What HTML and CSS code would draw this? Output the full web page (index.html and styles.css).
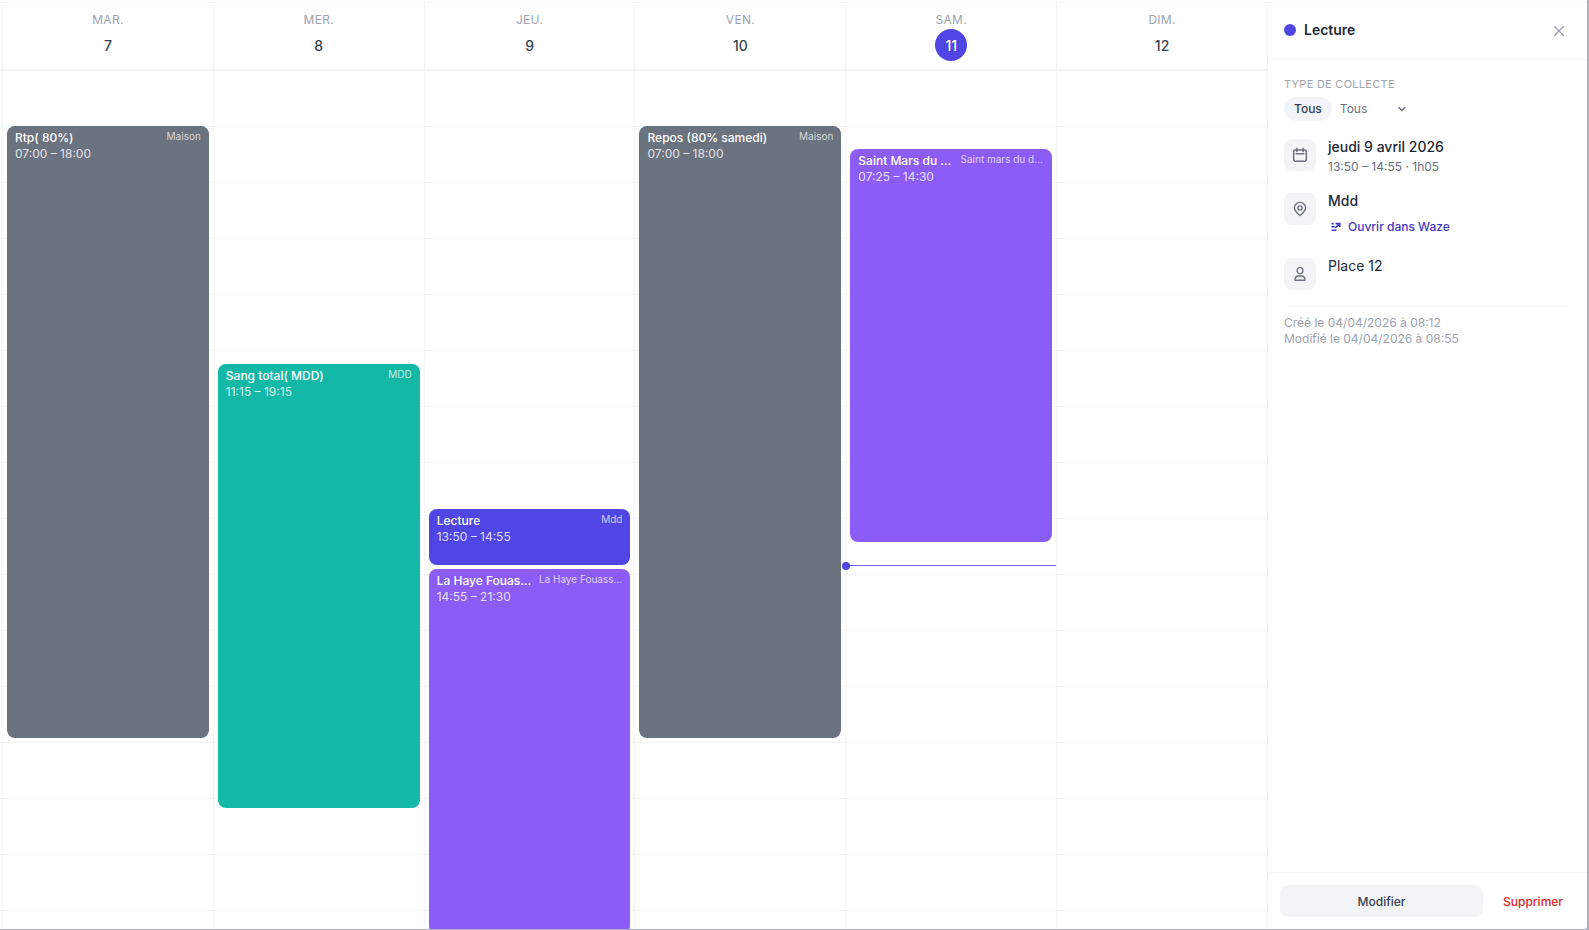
FILE: index.html
```html
<!DOCTYPE html>
<html lang="fr">
<head>
    <meta charset="UTF-8">
    <meta name="viewport" content="width=device-width, initial-scale=1.0">
    <title>Planning</title>
    <link rel="stylesheet" href="styles.css">
</head>
<body>
    <div class="app">
        <main class="calendar">
            <div class="days">
                <div class="day"><span class="day-name">mar.</span><span class="day-num">7</span></div>
                <div class="day"><span class="day-name">mer.</span><span class="day-num">8</span></div>
                <div class="day"><span class="day-name">jeu.</span><span class="day-num">9</span></div>
                <div class="day"><span class="day-name">ven.</span><span class="day-num">10</span></div>
                <div class="day"><span class="day-name">sam.</span><span class="day-num today">11</span></div>
                <div class="day"><span class="day-name">dim.</span><span class="day-num">12</span></div>
            </div>
            <!-- --start / --end : minutes depuis 06:00 -->
            <div class="grid">
                <div class="column">
                    <button class="event gray" style="--start:60; --end:720">
                        <span class="event-head"><span class="event-title">Rtp( 80%)</span><span class="event-place">Maison</span></span>
                        <span class="event-time">07:00 – 18:00</span>
                    </button>
                </div>
                <div class="column">
                    <button class="event teal" style="--start:315; --end:795">
                        <span class="event-head"><span class="event-title">Sang total( MDD)</span><span class="event-place">MDD</span></span>
                        <span class="event-time">11:15 – 19:15</span>
                    </button>
                </div>
                <div class="column">
                    <button class="event indigo" style="--start:470; --end:535">
                        <span class="event-head"><span class="event-title">Lecture</span><span class="event-place">Mdd</span></span>
                        <span class="event-time">13:50 – 14:55</span>
                    </button>
                    <button class="event violet" style="--start:535; --end:930">
                        <span class="event-head"><span class="event-title">La Haye Fouassière</span><span class="event-place">La Haye Fouassière</span></span>
                        <span class="event-time">14:55 – 21:30</span>
                    </button>
                </div>
                <div class="column">
                    <button class="event gray" style="--start:60; --end:720">
                        <span class="event-head"><span class="event-title">Repos (80% samedi)</span><span class="event-place">Maison</span></span>
                        <span class="event-time">07:00 – 18:00</span>
                    </button>
                </div>
                <div class="column">
                    <button class="event violet" style="--start:85; --end:510">
                        <span class="event-head"><span class="event-title">Saint Mars du désert</span><span class="event-place">Saint mars du désert</span></span>
                        <span class="event-time">07:25 – 14:30</span>
                    </button>
                    <div class="now" style="--start:530"></div>
                </div>
                <div class="column"></div>
            </div>
        </main>

        <aside class="panel">
            <header class="panel-header">
                <span class="dot"></span>
                <h2>Lecture</h2>
                <button class="close" aria-label="Fermer">
                    <svg width="16" height="16" viewBox="0 0 16 16" fill="none" stroke="currentColor" stroke-width="1.4" stroke-linecap="round"><path d="M3.5 3.5l9 9M12.5 3.5l-9 9"/></svg>
                </button>
            </header>

            <div class="panel-body">
                <label class="field-label" for="type">Type de collecte</label>
                <div class="filter">
                    <span class="pill">Tous</span>
                    <div class="select">
                        <select id="type">
                            <option>Tous</option>
                            <option>Lecture</option>
                            <option>Sang total</option>
                        </select>
                        <svg width="8" height="8" viewBox="0 0 8 8" fill="none" stroke="currentColor" stroke-width="1.5" stroke-linecap="round" stroke-linejoin="round"><path d="M1 2.5l3 3 3-3"/></svg>
                    </div>
                </div>

                <div class="info">
                    <span class="icon">
                        <svg width="16" height="16" viewBox="0 0 16 16" fill="none" stroke="currentColor" stroke-width="1.5" stroke-linecap="round" stroke-linejoin="round"><rect x="1.7" y="3" width="12.6" height="11.2" rx="1.6"/><path d="M4.9 1.3v3.2M11.1 1.3v3.2M4.3 6.8h7.4"/></svg>
                    </span>
                    <div>
                        <p class="info-title">jeudi 9 avril 2026</p>
                        <p class="info-sub">13:50 – 14:55 · 1h05</p>
                    </div>
                </div>
                <div class="info">
                    <span class="icon">
                        <svg width="16" height="16" viewBox="0 0 16 16" fill="none" stroke="currentColor" stroke-width="1.4" stroke-linecap="round" stroke-linejoin="round"><path d="M8 14.5C5.6 12.5 2.4 10.2 2.4 6.8a5.6 5.4 0 0 1 11.2 0c0 3.4-3.2 5.7-5.6 7.7z"/><circle cx="8" cy="7" r="2.1"/></svg>
                    </span>
                    <div>
                        <p class="info-title">Mdd</p>
                        <a class="waze" href="#">
                            <svg width="12" height="12" viewBox="0 0 12 12" fill="none" stroke="currentColor" stroke-width="1.6"><path d="M1.5 2.6h2.2M5.5 2.6h4.3v3.3M1.5 5.8h3.2M5.2 6.8l4.6-4M1.5 9.2h5"/></svg>
                            Ouvrir dans Waze
                        </a>
                    </div>
                </div>
                <div class="info">
                    <span class="icon">
                        <svg width="16" height="16" viewBox="0 0 16 16" fill="none" stroke="currentColor" stroke-width="1.4" stroke-linecap="round" stroke-linejoin="round"><rect x="5.2" y="1.6" width="5.6" height="6" rx="2.6"/><path d="M3 14.2c0-2.6 1.6-4.2 3.6-4.2h2.8c2 0 3.6 1.6 3.6 4.2z"/></svg>
                    </span>
                    <div>
                        <p class="info-title regular">Place 12</p>
                    </div>
                </div>

                <div class="meta">
                    <p>Créé le 04/04/2026 à 08:12</p>
                    <p>Modifié le 04/04/2026 à 08:55</p>
                </div>
            </div>

            <footer class="panel-footer">
                <button class="edit">Modifier</button>
                <button class="delete">Supprimer</button>
            </footer>
        </aside>
    </div>
</body>
</html>
```
FILE: styles.css
```css
*{
    box-sizing: border-box;
}
body{
    margin: 0;
    background-color: #aeb2bc;
    font-family: Inter, "Liberation Sans", sans-serif;
    font-size: 14px;
    line-height: 20px;
    color: #1f2937;
}
p, h2{
    margin: 0;
}
button{
    border: none;
    padding: 0;
    font-family: inherit;
    cursor: pointer;
}
.app{
    display: flex;
    height: calc(100vh - 1px);
    margin-right: 2px;
    padding-top: 2px;
    background-color: white;
    border-bottom-right-radius: 3px;
    overflow: hidden;
}

/* calendrier */
.calendar{
    flex: 1;
    min-width: 0;
    display: flex;
    flex-direction: column;
    border-top: 1px solid #f3f4f6;
}
.days{
    display: grid;
    grid-template-columns: repeat(6, 1fr);
    padding-left: 2px;
    border-bottom: 1px solid #f3f4f6;
}
.day{
    display: flex;
    flex-direction: column;
    align-items: center;
    padding: 8px 0;
    border-left: 1px solid #f3f4f6;
}
.day-name{
    font-size: 12px;
    line-height: 18px;
    letter-spacing: 0.025em;
    text-transform: uppercase;
    color: #9ca3af;
}
.day-num{
    width: 32px;
    height: 32px;
    line-height: 34px;
    border-radius: 50%;
    text-align: center;
    font-weight: 500;
    color: #374151;
}
.day-num.today{
    background-color: #4f46e5;
    color: white;
}
.grid{
    flex: 1;
    min-height: 0;
    display: grid;
    grid-template-columns: repeat(6, 1fr);
    padding-left: 2px;
    overflow: hidden;
    background-image: linear-gradient(#f3f4f6 1px, transparent 1px);
    background-size: 100% 56px;
}
.column{
    position: relative;
    border-left: 1px solid #f3f4f6;
}
.event{
    position: absolute;
    left: 4px;
    right: 4px;
    top: calc(var(--start) * 56px / 60);
    height: calc((var(--end) - var(--start)) * 56px / 60 - 4px);
    display: flex;
    flex-direction: column;
    padding: 4px 8px;
    border-radius: 8px;
    overflow: hidden;
    text-align: left;
    font-size: 12px;
    line-height: 16px;
    color: white;
}
.gray{
    background-color: #6b7280;
}
.teal{
    background-color: #14b8a6;
}
.indigo{
    background-color: #4f46e5;
}
.violet{
    background-color: #8b5cf6;
}
.event-head{
    display: flex;
    justify-content: space-between;
    gap: 6px;
}
.event-title, .event-place{
    overflow: hidden;
    white-space: nowrap;
    text-overflow: ellipsis;
}
.event-title{
    font-weight: 500;
}
.event-place{
    flex-shrink: 0;
    max-width: 45%;
    font-size: 10px;
    line-height: 13px;
    opacity: 0.7;
}
.event-time{
    opacity: 0.8;
}
.now{
    position: absolute;
    left: 0;
    right: 0;
    top: calc(var(--start) * 56px / 60);
    height: 1px;
    background-color: #6d66ea;
}
.now::before{
    content: "";
    position: absolute;
    left: -4px;
    top: -3px;
    width: 8px;
    height: 8px;
    border-radius: 50%;
    background-color: #4f46e5;
}

/* panneau */
.panel{
    width: 320px;
    display: flex;
    flex-direction: column;
    border-top: 1px solid #f3f4f6;
    border-left: 1px solid #f3f4f6;
}
.panel-header{
    display: flex;
    align-items: flex-start;
    gap: 8px;
    padding: 16px;
    border-bottom: 1px solid #f3f4f6;
}
.dot{
    width: 12px;
    height: 12px;
    margin-top: 5px;
    border-radius: 50%;
    background-color: #4f46e5;
}
.panel-header h2{
    flex: 1;
    font-size: 14px;
    line-height: 22px;
    font-weight: 600;
}
.close{
    display: flex;
    padding: 4px;
    background: none;
    color: #9ca3af;
}
.panel-body{
    flex: 1;
    padding: 16px;
}
.field-label{
    display: block;
    margin-bottom: 5px;
    font-size: 11px;
    line-height: 16px;
    letter-spacing: 0.025em;
    text-transform: uppercase;
    color: #9ca3af;
}
.filter{
    display: flex;
    gap: 8px;
    margin-bottom: 16px;
    font-size: 12px;
}
.pill{
    padding: 0 10px;
    border-radius: 12px;
    line-height: 24px;
    font-weight: 500;
    background-color: #f1f5f9;
    color: #334155;
}
.select{
    display: grid;
    align-items: center;
    color: #6b7280;
}
.select select{
    grid-area: 1 / 1;
    width: 72px;
    height: 24px;
    padding: 0 0 2px;
    border: none;
    appearance: none;
    background: none;
    font-family: inherit;
    font-size: 12px;
    color: #6b7280;
}
.select svg{
    grid-area: 1 / 1;
    justify-self: end;
    margin-right: 6px;
    pointer-events: none;
}
.info{
    display: flex;
    align-items: flex-start;
    gap: 12px;
    margin-bottom: 16px;
}
.icon{
    display: flex;
    align-items: center;
    justify-content: center;
    width: 32px;
    height: 32px;
    margin-top: 2px;
    border-radius: 8px;
    background-color: #f3f4f6;
    color: #6b7280;
}
.info-title{
    font-weight: 500;
}
.regular{
    font-weight: 400;
}
.info-sub{
    margin-top: 2px;
    font-size: 12px;
    line-height: 16px;
    color: #6b7280;
}
.waze{
    display: flex;
    align-items: center;
    gap: 6px;
    margin: 4px 0 1px;
    padding: 4px 2px;
    font-size: 12px;
    line-height: 16px;
    font-weight: 500;
    text-decoration: none;
    color: #4338ca;
}
.meta{
    padding-top: 8px;
    border-top: 1px solid #f9fafb;
    font-size: 12px;
    line-height: 16px;
    color: #9ca3af;
}
.panel-footer{
    display: flex;
    gap: 8px;
    padding: 12px;
    border-top: 1px solid #f3f4f6;
}
.panel-footer button{
    height: 32px;
    border-radius: 8px;
    font-size: 12px;
    font-weight: 500;
}
.edit{
    flex: 1;
    background-color: #f3f4f6;
    color: #374151;
}
.panel-footer .delete{
    padding: 0 12px;
    background: none;
    color: #dc2626;
}
```
